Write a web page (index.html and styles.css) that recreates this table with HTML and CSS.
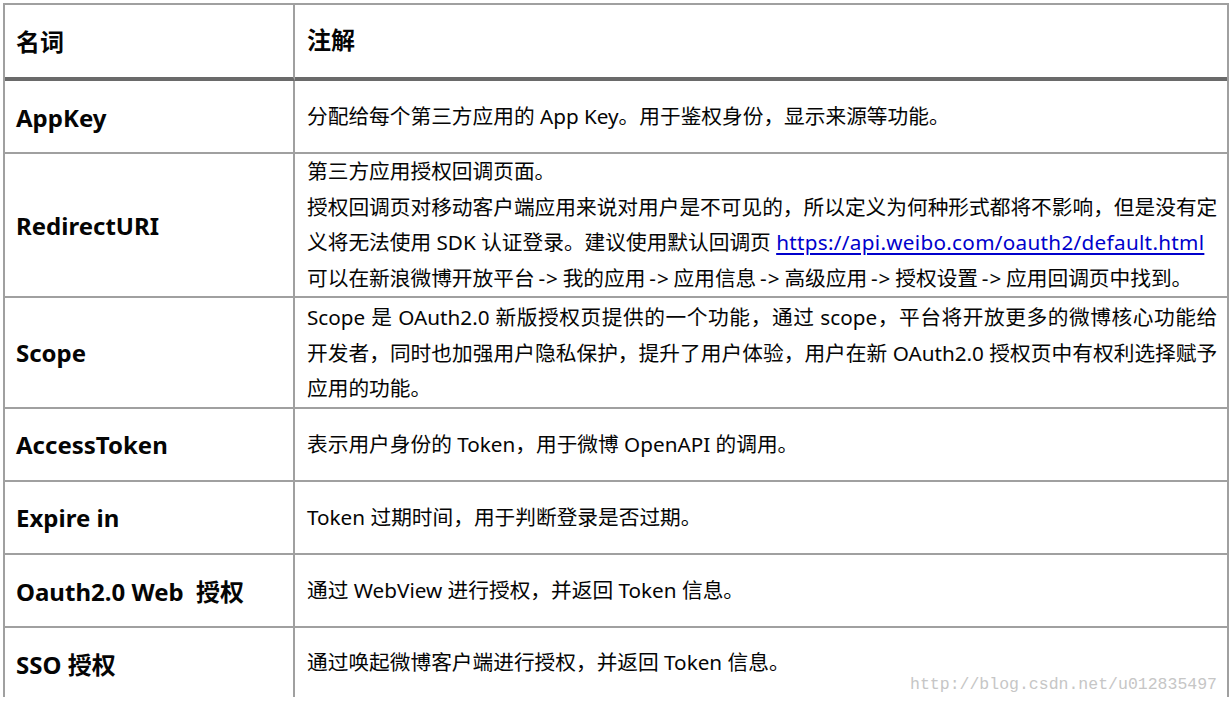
FILE: index.html
```html
<!DOCTYPE html>
<html lang="zh-CN">
<head>
<meta charset="utf-8">
<title>名词注解</title>
<link rel="stylesheet" href="styles.css">
</head>
<body>
<div class="page">
  <div class="table">
    <div class="cell head term">名词</div>
    <div class="cell head desc">注解</div>

    <div class="cell term">AppKey</div>
    <div class="cell desc">分配给每个第三方应用的 App Key。用于鉴权身份，显示来源等功能。</div>

    <div class="cell term">RedirectURI</div>
    <div class="cell desc block">
      <div class="lines">
        <span class="ln">第三方应用授权回调页面。</span>
        <span class="ln fill">授权回调页对移动客户端应用来说对用户是不可见的，所以定义为何种形式都将不影响，但是没有定</span>
        <span class="ln">义将无法使用 SDK 认证登录。建议使用默认回调页 <a href="#">https://api.weibo.com/oauth2/default.html</a></span>
        <span class="ln">可以在新浪微博开放平台<span class="arr">-&gt;</span>我的应用<span class="arr">-&gt;</span>应用信息<span class="arr">-&gt;</span>高级应用<span class="arr">-&gt;</span>授权设置<span class="arr">-&gt;</span>应用回调页中找到。</span>
      </div>
    </div>

    <div class="cell term">Scope</div>
    <div class="cell desc block multi">
      <div class="lines">
        <span class="ln fill">Scope 是 OAuth2.0 新版授权页提供的一个功能，通过 scope，平台将开放更多的微博核心功能给</span>
        <span class="ln fill">开发者，同时也加强用户隐私保护，提升了用户体验，用户在新 OAuth2.0 授权页中有权利选择赋予</span>
        <span class="ln">应用的功能。</span>
      </div>
    </div>

    <div class="cell term">AccessToken</div>
    <div class="cell desc">表示用户身份的 Token，用于微博 OpenAPI 的调用。</div>

    <div class="cell term">Expire in</div>
    <div class="cell desc">Token 过期时间，用于判断登录是否过期。</div>

    <div class="cell term">Oauth2.0 Web&nbsp; 授权</div>
    <div class="cell desc">通过 WebView 进行授权，并返回 Token 信息。</div>

    <div class="cell term last">SSO 授权</div>
    <div class="cell desc last">通过唤起微博客户端进行授权，并返回 Token 信息。</div>
  </div>
  <div class="watermark">http://blog.csdn.net/u012835497</div>
</div>
</body>
</html>
```

FILE: styles.css
```css
html, body {
  margin: 0;
  padding: 0;
  background: #ffffff;
}

body {
  width: 1231px;
  height: 705px;
  overflow: hidden;
  font-family: "Noto Sans", "Noto Sans CJK SC", sans-serif;
  color: #050505;
}

.page {
  position: relative;
  padding: 3px 0 0 3px;
  height: 702px;
}

.table {
  width: 1222px;
  border: 2px solid #a0a0a0;
  border-bottom: none;
  display: grid;
  grid-template-columns: 290px 1fr;
}

.cell {
  display: flex;
  align-items: center;
  min-height: 73px;
  border-bottom: 2px solid #a0a0a0;
  box-sizing: border-box;
}

.term {
  border-right: 2px solid #a0a0a0;
  padding: 1px 0 0 11px;
  font-size: 24px;
  font-weight: 700;
}

.desc {
  padding: 1px 10px 0 12px;
  font-size: 20.7px;
  line-height: 35.5px;
}

.head {
  min-height: 76px;
  border-bottom: 4px solid #6a6a6a;
  font-size: 24px;
  font-weight: 700;
  padding-top: 0;
  padding-bottom: 2px;
}

.desc.block {
  padding-top: 0;
}

.desc.multi {
  padding-top: 2px;
}

.lines {
  width: 100%;
}

.ln {
  display: block;
  white-space: nowrap;
}

.ln.fill {
  text-align: justify;
  text-align-last: justify;
}

.arr {
  margin: 0 3.8px;
  letter-spacing: 1px;
}

.desc a {
  color: #0000cc;
  text-decoration: underline;
  text-underline-offset: 3px;
  letter-spacing: 0.3px;
}

.last {
  border-bottom: none;
  min-height: 69px;
  padding-top: 2px;
}

.watermark {
  position: absolute;
  right: 14px;
  top: 675px;
  font-family: "Liberation Mono", monospace;
  font-size: 16.5px;
  color: #c6c6c6;
}
```
